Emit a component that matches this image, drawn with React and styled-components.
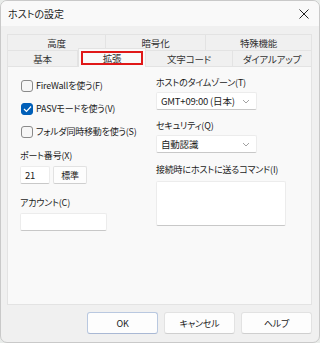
import React from "react";
import styled, { createGlobalStyle } from "styled-components";

const GlobalStyle = createGlobalStyle`
  html, body {
    margin: 0;
    padding: 0;
    background: #e9ecea;
  }
  body {
    font-family: "Noto Sans CJK JP", "Noto Sans", sans-serif;
    font-size: 9px;
    letter-spacing: -0.2px;
    font-feature-settings: "palt";
    white-space: nowrap;
    color: #1b1b1b;
  }
`;

const Window = styled.div`
  width: 320px;
  height: 343px;
  box-sizing: border-box;
  background: #f0f0f0;
  border: 1px solid #c9c9c9;
  border-radius: 7px;
  overflow: hidden;
  display: flex;
  flex-direction: column;
`;

const TitleBar = styled.div`
  height: 25px;
  display: flex;
  align-items: center;
  justify-content: space-between;
  padding: 0 10px 0 7px;
  background: #f9f9f9;
  font-size: 10px;
  letter-spacing: 0;
`;

const Body = styled.div`
  flex: 1;
  display: flex;
  flex-direction: column;
  padding: 8px 7px 0 6px;
`;

const TabRow = styled.div`
  display: flex;
  height: 16px;
  font-size: 9.5px;
`;

const Tab = styled.div`
  width: ${(p) => p.w}px;
  box-sizing: border-box;
  display: flex;
  align-items: center;
  justify-content: center;
  border: 1px solid #e3e3e3;
  border-bottom: none;
  border-left: ${(p) => (p.first ? "1px solid #e3e3e3" : "none")};
  background: #f0f0f0;
  color: #333;
  position: relative;
`;

const ActiveTab = styled(Tab)`
  background: #f9f9f9;
  margin-top: -2px;
  height: 19px;
  z-index: 1;
  border-left: 1px solid #e3e3e3;
`;

const Focus = styled.span`
  position: absolute;
  inset: 2px 2px 2px 2px;
  border: 2px solid #e01818;
`;

const Panel = styled.div`
  height: 239px;
  box-sizing: border-box;
  background: #f9f9f9;
  border: 1px solid #e3e3e3;
  display: grid;
  grid-template-columns: 136px 1fr;
  padding: 7px 12px 0 12px;
`;

const Column = styled.div`
  display: flex;
  flex-direction: column;
`;

const CheckRow = styled.label`
  display: flex;
  align-items: center;
  gap: 3px;
  height: 23px;
  margin-left: 1px;
`;

const Box = styled.span`
  flex-shrink: 0;
  width: 12px;
  height: 12px;
  box-sizing: border-box;
  border-radius: 3px;
  border: 1px solid ${(p) => (p.on ? "#005fb8" : "#8a8a8a")};
  background: ${(p) => (p.on ? "#005fb8" : "#f6f6f6")};
  display: flex;
  align-items: center;
  justify-content: center;
`;

const Label = styled.div`
  margin-top: ${(p) => p.top || 0}px;
  margin-bottom: ${(p) => p.bottom ?? 2}px;
  line-height: 14px;
`;

const Row = styled.div`
  display: flex;
  gap: 3px;
`;

const Field = styled.div`
  width: ${(p) => p.w}px;
  height: ${(p) => p.h || 18}px;
  box-sizing: border-box;
  background: #ffffff;
  border: 1px solid #ececec;
  border-bottom-color: #c8c8c8;
  border-radius: 2px;
  display: flex;
  align-items: center;
  justify-content: space-between;
  gap: 2px;
  padding: 0 6px 0 4px;
  font-size: 9.5px;
`;

const SmallButton = styled.div`
  width: 34px;
  height: 18px;
  box-sizing: border-box;
  background: #fdfdfd;
  border: 1px solid #e2e2e2;
  border-bottom-color: #cfcfcf;
  border-radius: 2px;
  display: flex;
  align-items: center;
  justify-content: center;
`;

const Footer = styled.div`
  display: flex;
  justify-content: flex-end;
  gap: 6px;
  padding: 7px 0 0 0;
`;

const Button = styled.div`
  width: 71px;
  height: 22px;
  box-sizing: border-box;
  background: #fdfdfd;
  border: 1px solid ${(p) => (p.primary ? "#b9c8e0" : "#e2e2e2")};
  border-bottom-color: ${(p) => (p.primary ? "#a9b8d4" : "#cfcfcf")};
  border-radius: 3px;
  display: flex;
  align-items: center;
  justify-content: center;
`;

const Chevron = () => (
  <svg width="8" height="5" viewBox="0 0 8 5">
    <path d="M1 1 L4 4 L7 1" fill="none" stroke="#8a8a8a" strokeWidth="0.8" />
  </svg>
);

const Check = ({ on }) => (
  <Box on={on}>
    {on && (
      <svg width="9" height="8" viewBox="0 0 9 8">
        <path d="M1 4 L3.5 6.5 L8 1.5" fill="none" stroke="#fff" strokeWidth="1.2" />
      </svg>
    )}
  </Box>
);

export default function App() {
  return (
    <>
      <GlobalStyle />
      <Window>
        <TitleBar>
          <span>ホストの設定</span>
          <svg width="10" height="10" viewBox="0 0 10 10">
            <path d="M0.5 0.5 L9.5 9.5 M9.5 0.5 L0.5 9.5" stroke="#222" strokeWidth="1" />
          </svg>
        </TitleBar>
        <Body>
          <TabRow>
            <Tab w={99} first>高度</Tab>
            <Tab w={100}>暗号化</Tab>
            <Tab w={106}>特殊機能</Tab>
          </TabRow>
          <TabRow>
            <Tab w={71} first>基本</Tab>
            <ActiveTab w={68}>
              拡張
              <Focus />
            </ActiveTab>
            <Tab w={87}>文字コード</Tab>
            <Tab w={79}>ダイアルアップ</Tab>
          </TabRow>
          <Panel>
            <Column>
              <CheckRow>
                <Check />
                FireWallを使う(F)
              </CheckRow>
              <CheckRow>
                <Check on />
                PASVモードを使う(V)
              </CheckRow>
              <CheckRow>
                <Check />
                フォルダ同時移動を使う(S)
              </CheckRow>
              <Label top={6} bottom={3}>ポート番号(X)</Label>
              <Row>
                <Field w={30}>21</Field>
                <SmallButton>標準</SmallButton>
              </Row>
              <Label top={12} bottom={3}>アカウント(C)</Label>
              <Field w={87} />
            </Column>
            <Column>
              <Label top={2}>ホストのタイムゾーン(T)</Label>
              <Field w={101}>
                GMT+09:00 (日本)
                <Chevron />
              </Field>
              <Label top={9}>セキュリティ(Q)</Label>
              <Field w={101}>
                自動認識
                <Chevron />
              </Field>
              <Label top={10} bottom={4}>接続時にホストに送るコマンド(I)</Label>
              <Field w={130} h={45} />
            </Column>
          </Panel>
          <Footer>
            <Button primary>OK</Button>
            <Button>キャンセル</Button>
            <Button>ヘルプ</Button>
          </Footer>
        </Body>
      </Window>
    </>
  );
}
